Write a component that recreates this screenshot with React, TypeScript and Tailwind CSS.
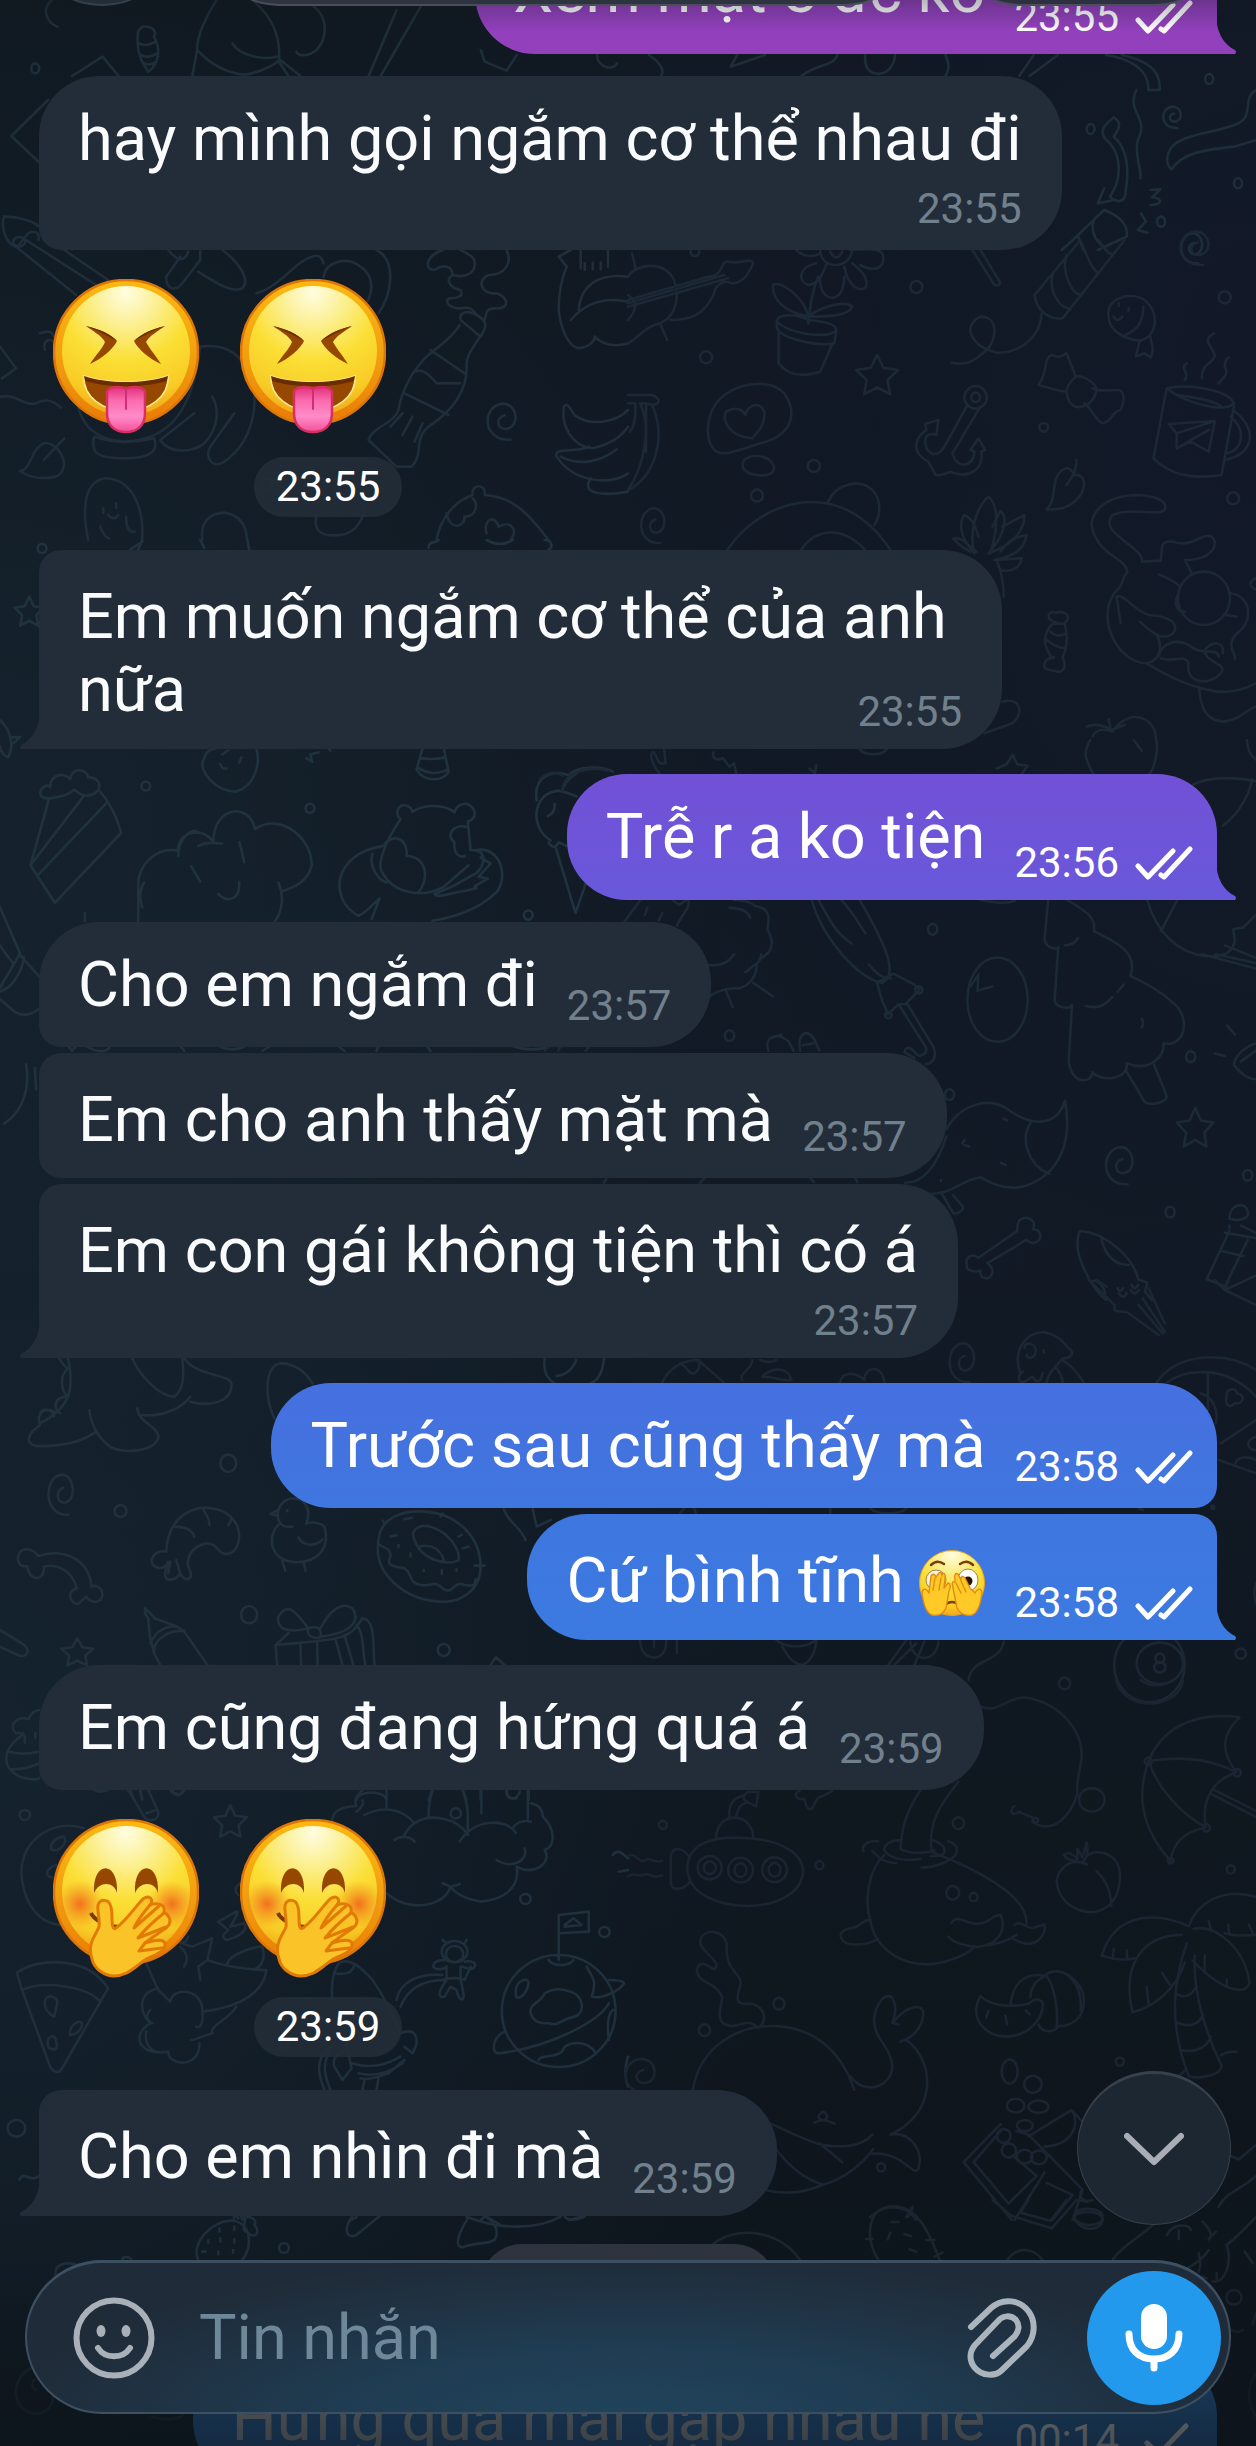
import React from "react";

/* ---------- wallpaper doodles ---------- */

const oval = (x: number, y: number, rx: number, ry: number) =>
  `M${x - rx} ${y}a${rx} ${ry} 0 1 0 ${2 * rx} 0a${rx} ${ry} 0 1 0 ${-2 * rx} 0`;

const dots = (rx: number, ry: number, ...pts: number[][]) => pts.map(([x, y]) => oval(x, y, rx, ry)).join("");

const spiral = (x: number, y: number, a: number, b: number) =>
  `M${x} ${y - 0.35 * b}C${x - 0.5 * a} ${y - 0.2 * b} ${x - 0.4 * a} ${y + 0.45 * b} ${x + 0.1 * a} ${y + 0.4 * b}` +
  `C${x + 0.8 * a} ${y + 0.3 * b} ${x + 0.7 * a} ${y - b} ${x - 0.1 * a} ${y - b}` +
  `C${x - 1.2 * a} ${y - 0.9 * b} ${x - 1.2 * a} ${y + 1.1 * b} ${x + 0.3 * a} ${y + b}`;

const star = (x: number, y: number, a: number, b: number) => {
  const pts: string[] = [];
  for (let i = 0; i < 10; i++) {
    const r = i % 2 ? 0.5 : 1;
    const t = -Math.PI / 2 + (i * Math.PI) / 5;
    pts.push(`${(x + a * r * Math.cos(t)).toFixed(1)} ${(y + b * r * Math.sin(t)).toFixed(1)}`);
  }
  return `M${pts.join("L")}Z`;
};

type Patch = { x: number; y: number; sx: number; sy: number; stroke: string; d: string };

const patches: Patch[] = [
  {
    x: 0, y: 0, sx: 0.8013, sy: 0.3333, stroke: "#1e2e39",
    d:
      "M65 0C50 30 60 70 72 80M172 110C170 160 178 190 185 215C200 190 200 140 192 110C200 80 170 60 172 110M174 130q8 12 20 -5M176 165q8 12 20 -5M180 190q8 8 15 -5" +
      "M270 0C255 60 245 110 246 150C265 200 285 220 305 224C330 215 345 190 348 180C350 130 345 60 315 0M290 130C300 170 330 180 345 170M385 10C410 40 410 110 395 150C385 170 372 170 370 155" +
      "M246 150L240 228M350 180L375 228M348 185L360 228M495 30L460 228M525 20L475 228M90 228L128 170L148 228M60 300L14 408L50 490" +
      "M600 150L605 185L632 212L645 165M745 165C745 200 765 215 770 190M810 165C825 190 830 210 825 228M920 165L912 200L955 165M1080 165C1075 240 1115 240 1117 165M1180 165C1185 190 1185 210 1180 228M1000 228C1020 190 1040 200 1045 165M1290 165L1272 228M1320 165L1285 228" +
      "M1380 165C1410 175 1435 210 1433 270L1447 270C1450 210 1430 180 1400 165M1418 270C1405 340 1435 350 1420 420C1415 470 1425 500 1423 535" +
      "M1390 352C1375 380 1370 400 1385 430C1400 470 1400 540 1385 590C1395 610 1405 610 1405 570C1410 500 1405 440 1390 410C1395 390 1402 370 1390 352" +
      "M1568 270C1550 290 1565 350 1545 370C1520 400 1470 400 1460 450C1453 480 1458 500 1462 508C1475 460 1500 450 1540 440L1568 420" +
      "M1436 570L1448 568L1438 592C1452 595 1450 615 1436 615M1424 640L1430 665L1420 690L1432 698" +
      "M1378 630C1400 650 1408 680 1406 710L1370 750M1378 630C1360 670 1340 720 1325 750M1365 660C1360 700 1370 730 1378 740M1345 705L1352 750" +
      "M5 650C0 690 10 740 22 740L35 700C45 690 50 700 48 720M5 650C30 650 45 670 55 690L90 748M1378 565L1370 610L1390 600" +
      dots(5, 15, [44, 205], [1509, 237], [1361, 387], [1545, 550], [1449, 665]) +
      spiral(1465, 352, 15, 32) + spiral(1490, 745, 18, 45),
  },
  {
    x: 0, y: 240, sx: 0.4005, sy: 0.3333, stroke: "#1f2e3a",
    d:
      "M40 20L190 165M65 0L240 135M160 30L270 120M420 30C440 60 460 70 470 35M450 50L415 110C415 150 440 155 455 130L500 60L500 30M495 95C540 130 580 160 605 145C625 120 600 70 555 30" +
      "M640 160C700 140 740 60 780 50C800 40 805 60 808 70M808 110C815 60 870 50 900 80C940 110 930 180 905 200M940 30C990 60 980 160 945 220" +
      "M1105 30C1060 50 1060 90 1085 90C1110 70 1130 80 1130 105C1160 115 1185 100 1185 75C1190 50 1165 40 1150 30M1265 30C1280 70 1260 105 1220 105C1190 120 1200 165 1240 160C1270 170 1275 210 1235 205C1215 205 1215 215 1210 240M1130 105C1110 120 1125 145 1150 150C1160 170 1140 175 1120 175C1110 190 1125 205 1150 205C1180 200 1180 210 1190 225" +
      "M1150 240C1145 215 1170 210 1190 225C1220 245 1215 260 1200 290L1150 240M1148 255C1120 310 1075 330 1050 370C1020 410 1000 470 995 510C985 550 930 560 920 600L990 680L1028 680C1060 640 1030 600 1070 560C1120 520 1170 460 1165 370C1165 340 1190 310 1200 285M1075 330L1160 400M1030 400C1050 380 1070 400 1090 430L1150 430M1010 460L1120 525M1005 520L975 560M1030 530L1005 585M1055 550L1035 605" +
      "M0 320L40 385L5 415M100 280C120 270 130 275 135 290M112 330C105 300 130 290 135 310M0 470C40 460 60 500 90 490C120 470 140 490 152 503M190 470C200 560 240 600 310 605C420 600 480 520 500 320C560 310 600 340 620 400C650 460 640 600 560 665C530 690 510 650 525 620L585 520M400 600C420 640 480 640 510 610C550 560 545 500 530 470M400 600L485 520M235 590C225 640 245 655 310 655C380 655 395 630 385 595C330 610 280 610 235 590" +
      "M50 693C80 690 75 620 115 608C160 620 175 690 140 710C100 720 70 710 50 693M110 660L160 595M220 900C200 780 220 720 265 715C330 720 360 800 355 900M258 805v14M290 790v14M270 825q15 20 25 0M250 860q10 30 22 35M315 830q0 50 22 45" +
      "M505 900C500 850 520 820 560 818C600 825 615 860 617 900M790 825C780 880 810 890 850 885C890 880 915 830 910 780M1090 900C1100 830 1140 780 1180 765C1175 730 1215 730 1210 765C1290 770 1330 840 1370 900M1115 820C1120 870 1160 865 1160 830C1190 830 1195 790 1180 775M1215 880C1205 840 1235 820 1245 860C1275 840 1295 870 1275 900" +
      "M1425 30L1395 50L1415 80C1400 120 1395 170 1395 210C1400 270 1420 320 1445 325C1475 320 1485 300 1485 290M1450 30V85M1518 30V80M1460 70v20M1480 68v20M1500 68v20M1445 210C1450 130 1500 100 1568 110M1425 240C1460 190 1510 170 1568 185M1485 290C1510 320 1540 320 1568 310" +
      "M1408 500C1420 480 1425 520 1440 530C1480 560 1540 545 1568 510M1408 500C1400 560 1430 620 1480 625C1530 610 1550 590 1568 560M1390 650C1380 620 1440 640 1470 620M1390 650C1440 740 1540 730 1568 700M1400 650C1450 680 1500 665 1540 628M1475 715C1450 760 1500 770 1568 755" +
      dots(14, 15, [665, 733]) + spiral(1260, 545, 48, 54) + oval(48, 5, 15, 14),
  },
  {
    x: 628, y: 240, sx: 0.4005, sy: 0.3333, stroke: "#1c2836",
    d:
      "M0 110C20 70 90 60 115 120C130 170 120 230 80 250C40 260 20 300 0 310M0 180L200 110C240 110 230 60 250 65C280 75 310 50 312 70C300 110 280 130 260 130C240 120 220 130 215 160C190 230 150 240 105 240M0 190L240 105M0 200L250 115M80 250L98 300M0 165q35 30 0 75M10 40L20 90" +
      "M420 30C440 55 470 50 480 40M480 30C480 90 555 90 560 30M470 70C430 80 420 120 450 135C480 130 485 100 495 75M480 120C480 190 540 195 540 110M540 80C550 140 580 160 595 140C600 110 580 90 560 70M555 30C590 30 620 20 635 40C645 80 620 100 580 75M505 35q15 35 30 0" +
      "M450 250C455 200 460 150 475 110M450 230C440 170 380 120 362 135C360 180 390 215 450 230C490 230 550 230 560 200C540 180 480 200 450 230M372 245C370 220 420 220 450 240C500 245 520 255 520 270C500 300 400 280 372 245C370 270 375 270 378 275C400 300 480 320 515 310L520 275M376 270V370C400 410 440 410 480 395L510 312" +
      star(622, 410, 55, 65) +
      "M240 640C190 640 190 540 220 490C260 430 350 410 390 460C430 530 400 590 330 610C290 625 260 640 240 640M310 595C250 590 235 540 245 515C265 500 285 505 293 525C300 490 330 485 340 515C345 550 325 575 310 595M290 660C310 640 350 645 363 675C370 700 350 710 320 705C290 700 280 680 290 660" +
      "M0 465L60 465C90 480 75 500 50 492L30 490C60 560 40 680 0 750M60 495C100 600 60 720 0 750M45 490V635M0 490L18 490C20 540 15 560 5 575" +
      oval(868, 472, 28, 34) + oval(868, 472, 11, 14) +
      "M848 495L790 620C770 660 740 640 742 600C745 580 760 580 770 585L775 540L742 552L745 570C710 600 710 640 750 665L768 705C790 710 800 690 810 698C850 715 890 690 882 635L892 630L875 595L855 630L865 635C865 680 820 690 810 640L880 500" +
      "M860 30L915 135C925 140 930 130 928 125L880 30M1130 0L1015 165C1020 210 1050 240 1085 235L1240 0M1095 45C1080 100 1110 160 1130 165M1060 105C1050 160 1080 200 1098 205M1133 10C1150 60 1160 90 1175 100M1175 0C1190 30 1200 40 1210 45M1033 220C1030 290 980 340 920 338C860 320 830 260 880 230C930 230 920 310 890 335C860 370 840 375 808 368" +
      "M1200 230C1190 180 1250 150 1290 180C1330 220 1320 290 1280 302C1240 300 1200 270 1200 230M1287 200C1285 260 1265 270 1240 287M1278 300L1268 350L1290 340L1305 352C1320 320 1300 300 1305 290M1225 190v8M1250 205v8M1212 230q10 20 22 0" +
      "M1025 435C1050 400 1035 350 1060 345C1080 360 1090 340 1095 340L1118 410C1100 430 1095 445 1095 455C1070 455 1045 440 1025 435M1095 455C1100 510 1130 505 1145 495C1165 480 1175 450 1165 435C1145 410 1120 405 1118 410M1140 490C1160 510 1170 545 1185 550C1210 545 1210 510 1230 510C1240 490 1240 450 1225 450C1190 450 1170 455 1160 445" +
      "M1345 445L1312 655C1350 700 1400 720 1482 705L1513 500M1345 445C1400 430 1500 450 1513 490C1490 520 1390 490 1345 445M1370 465C1400 470 1470 480 1480 500M1510 510C1570 560 1570 640 1490 660M1505 530C1545 570 1535 630 1495 640M1350 552L1465 543L1370 580L1350 552M1370 580V625L1450 570M1465 543L1450 635L1405 605L1370 625" +
      "M1390 420C1405 400 1375 385 1395 370M1433 415C1430 370 1465 370 1465 345C1460 320 1430 300 1463 280M1475 430C1490 410 1500 400 1490 380C1490 360 1500 352 1500 352" +
      "M1045 808C1075 780 1050 700 1095 685C1110 685 1110 700 1115 705C1140 700 1150 740 1120 780C1100 805 1070 810 1045 808M1095 735C1110 710 1120 690 1120 660" +
      "M248 930C330 780 530 700 655 930M500 785C520 730 580 715 610 750C635 780 630 830 615 855M432 930C470 860 540 860 592 930" +
      "M865 940C850 880 870 800 900 770C930 800 920 880 905 940M870 935C830 910 825 850 840 825C865 840 870 870 875 890M910 860L930 812C955 840 930 900 900 940M935 860L990 825C990 880 950 920 900 940M930 935C950 900 970 890 995 885C990 930 960 950 915 960M855 935C830 920 815 900 812 895C830 890 850 910 860 935M930 990C960 1000 980 980 983 955L920 960C935 1000 938 1040 938 1070" +
      "M1340 810C1350 780 1310 765 1265 765C1180 770 1150 830 1160 870C1180 950 1240 950 1247 995C1230 1020 1235 1040 1225 1045C1160 1120 1220 1270 1295 1270C1350 1310 1400 1340 1470 1355C1520 1360 1550 1340 1568 1330M1340 810C1320 830 1260 800 1210 825C1170 880 1290 920 1283 965L1330 962C1335 930 1325 900 1360 905C1410 925 1430 880 1455 888C1480 910 1460 960 1390 960L1408 1000M1325 1003C1360 1020 1370 1030 1380 1040" +
      oval(1438, 1075, 65, 80) +
      "M1375 1060C1360 1090 1370 1115 1390 1115M1230 1150L1220 1070C1240 1060 1260 1110 1300 1125C1400 1130 1370 1210 1320 1185C1300 1170 1290 1160 1278 1145M1320 1185C1340 1230 1320 1265 1295 1270M1325 1250C1330 1210 1370 1195 1400 1215C1430 1250 1470 1220 1475 1250M1400 1270C1390 1330 1450 1340 1480 1300C1500 1270 1440 1270 1440 1230C1460 1200 1490 1205 1485 1240M1330 1255C1360 1270 1390 1240 1400 1270M1495 1125L1520 1130M1505 1060C1560 1070 1560 1150 1520 1180C1490 1220 1520 1240 1515 1258M1425 1340C1430 1400 1440 1440 1485 1445C1530 1440 1540 1410 1568 1400M1568 1015Q1540 1030 1568 1050" +
      "M1075 1150C1040 1140 1045 1110 1070 1118C1090 1110 1110 1130 1090 1150C1100 1190 1095 1230 1085 1250C1100 1290 1080 1300 1068 1293C1045 1290 1030 1285 1045 1260C1060 1250 1070 1250 1060 1255C1035 1220 1035 1180 1060 1152L1090 1150M1055 1175q15 20 40 5M1045 1200q20 20 45 25" +
      "M1145 1460C1160 1450 1190 1455 1205 1470L1200 1437M1205 1470L1240 1455M1160 1490C1170 1460 1200 1470 1210 1475C1250 1400 1320 1430 1318 1500M935 1385C980 1370 990 1420 960 1450L890 1480" +
      dots(15, 18, [195, 352], [720, 141], [464, 678], [322, 767], [1490, 172], [1511, 775]) +
      dots(11, 13, [1038, 562], [167, 35]) +
      spiral(68, 857, 40, 52) + spiral(1422, 25, 48, 50),
  },
  {
    x: 0, y: 540, sx: 0.4005, sy: 0.3827, stroke: "#21323f",
    d:
      star(73, 190, 38, 42) +
      "M0 470C30 500 35 540 20 568C10 565 0 550 0 540M30 515L50 515L35 530M105 672C90 650 120 635 125 645C130 605 165 610 175 625C180 590 220 600 220 620C260 620 255 665 220 668C200 670 190 655 185 652C170 670 120 680 105 672M122 678L76 850L137 948L303 765C290 720 270 680 248 655M76 850L210 668M95 875L268 685" +
      "M345 995V900C345 850 390 800 445 812C440 770 500 740 533 790C530 700 620 680 637 755C700 710 780 780 778 850C770 890 740 905 705 918M445 825C445 800 460 760 490 760M495 800C510 790 530 790 555 793M598 790L610 842M477 852L500 893M545 925C570 950 600 940 597 893M695 895C710 930 705 970 687 995M360 895C345 920 350 940 355 960" +
      "M510 570C490 600 540 660 590 657C640 640 650 580 640 545M510 570C515 550 530 545 540 545M550 585q5 15 15 12M570 550L555 560M603 568L597 582M765 570L780 580L775 560L795 555M820 545L825 550" +
      "M1055 545L1040 600C1060 635 1110 630 1120 605L1108 545M1050 570Q1080 575 1112 568M1043 595Q1080 620 1118 600" +
      "M1000 730C980 710 1000 680 1025 700L1030 710C1060 690 1110 690 1135 712C1140 690 1165 680 1180 700C1195 720 1175 735 1168 735L1175 810M1000 730C960 790 940 850 955 870C980 920 1050 940 1110 905L1170 850M960 795C990 760 1020 790 1015 825C1070 830 1070 890 1045 920M1165 750C1135 740 1110 770 1135 790C1130 830 1160 830 1160 825M955 800C830 820 820 940 895 982C920 970 930 950 948 937L928 990M930 820C920 860 950 890 965 895M1175 810C1220 810 1210 850 1190 870L1130 905L1085 925C1090 935 1100 930 1190 910L1185 905L1218 885L1195 880L1225 845L1200 830M1190 810C1250 800 1270 880 1240 920C1190 970 1130 985 1080 995" +
      "M1340 680C1330 610 1390 600 1420 615C1440 590 1500 590 1530 605M1405 655C1410 630 1430 615 1440 610M1375 785C1320 750 1330 660 1395 655C1420 660 1430 665 1440 670M1385 690Q1385 715 1368 722M1370 790C1380 810 1390 800 1395 790L1415 800M1388 805L1437 975L1465 890" +
      "M0 960L50 1080L0 1170M0 1060L35 1110M50 1085L98 1140M0 1200L40 1235C60 1245 80 1240 98 1225M0 1180C30 1170 55 1130 60 1090M65 1370C75 1430 60 1490 10 1525M87 1380L90 1435M212 975V995M170 1322L180 1335L190 1322M215 1322C240 1340 270 1340 275 1322M450 1322L460 1335M545 1322Q580 1340 615 1322M655 1335L675 1322M845 1322L860 1335M940 1335L945 1322M1065 1322L1075 1335M1280 1322Q1330 1340 1375 1322M325 25L355 5V0M345 25L355 0M500 0L510 20M618 0L622 25M1070 20C1070 0 1090 10 1095 0M1215 0Q1250 20 1280 0M1360 0C1380 0 1380 20 1370 25" +
      dots(11, 12, [105, 22], [364, 643], [774, 701], [1319, 980]),
  },
  {
    x: 540, y: 740, sx: 0.4566, sy: 0.3571, stroke: "#1c2936",
    d:
      "M262 95C240 60 240 30 250 35C260 60 260 70 275 65L272 25M380 35C375 50 390 60 400 50L415 75L425 65L430 95M0 110C20 85 40 90 50 100M48 145C50 100 90 70 150 85M590 80L602 92M605 70L603 88M700 25C710 45 750 45 760 25M1000 80L1022 68L1035 42L1045 68L1068 72L1055 95M1195 45C1195 20 1200 10 1205 0M1195 45C1200 70 1208 85 1212 95M1350 0C1355 30 1345 80 1335 95M1300 0L1318 30M1430 125C1470 100 1530 105 1568 115M1560 110C1550 170 1520 220 1495 240M1548 0Q1550 40 1568 55" +
      "M185 508L220 448M235 470L230 490M268 485L260 505M325 448C330 470 310 490 300 520M290 448L305 462L320 448M415 470C440 470 455 480 460 497M425 448C460 450 470 462 470 465C510 470 500 510 498 530C520 580 500 600 480 615M370 630C400 635 415 620 425 600M450 650L480 620L485 600M475 625C475 680 440 700 425 695C390 700 380 710 372 718M467 680L510 718M408 705L422 748" +
      "M595 448C620 560 700 670 750 680C780 660 770 600 700 448M610 448C640 520 650 540 682 570M660 448C690 490 700 520 713 542M720 628C740 660 750 665 768 668M773 655L738 680C745 710 750 740 755 745L762 768L785 740L800 740L823 710L832 700L820 685L775 655" +
      oval(763, 770, 7, 9) + oval(830, 700, 8, 10) +
      "M788 745L845 860C850 880 830 890 825 880C805 850 800 865 798 875L820 890M805 740L862 860C870 890 860 905 845 908" +
      oval(1002, 727, 66, 118) +
      "M943 690L960 657L958 702L990 690M960 445C990 455 1020 460 1040 450" +
      "M1113 448L1105 560C1110 590 1140 585 1135 580L1127 730C1130 750 1160 755 1165 742L1158 900C1165 970 1210 960 1210 930C1230 960 1290 950 1285 905C1330 930 1370 890 1365 850C1420 860 1420 770 1390 740C1350 690 1290 660 1293 660C1310 600 1270 570 1213 535C1220 490 1180 470 1155 448M1150 575Q1170 575 1178 555M1195 745C1225 755 1240 740 1253 720M1265 705L1278 685M1318 780q5 15 0 25M1283 925L1325 1015C1350 1025 1375 1010 1372 995L1345 910" +
      "M1330 448C1350 540 1400 600 1460 605C1510 610 1520 580 1522 560L1518 530L1540 525L1568 490M1360 535L1395 450M1450 600L1568 640M1500 575L1568 610M1480 600L1568 625" +
      star(1435, 1090, 42, 60) + spiral(1275, 1192, 40, 52) +
      "M1505 800L1522 825M1478 878L1500 885M1568 850C1540 860 1520 890 1520 910C1540 945 1560 950 1568 950M1535 900L1568 870" +
      "M890 1090C920 1020 980 1000 1020 1030C1070 1080 1130 1090 1150 1010C1165 1120 1140 1180 1110 1215C1060 1270 1010 1260 965 1225C920 1230 900 1280 840 1270M1075 1070C1050 1120 1070 1190 1115 1215M800 1240C840 1240 870 1190 890 1110M930 1120L925 1130M940 1138L930 1135M1010 1185l10 5M1015 1060l8 5M878 1232v3M880 1270L905 1325C920 1330 930 1310 925 1305L905 1275" +
      "M1045 1375L960 1450C945 1435 930 1450 935 1470C930 1490 960 1490 965 1485C960 1510 985 1515 990 1495C995 1480 985 1470 980 1465L1065 1400C1080 1420 1100 1400 1095 1385C1095 1370 1080 1370 1080 1370C1090 1340 1060 1330 1050 1345C1045 1355 1045 1365 1045 1375" +
      "M1183 1375C1160 1430 1210 1540 1240 1568M1183 1375C1240 1380 1300 1450 1310 1510L1330 1520L1325 1545L1340 1568M1230 1400C1240 1450 1260 1470 1290 1470M1210 1515C1220 1510 1235 1530 1238 1550M1265 1535q5 15 12 0M1295 1525q8 20 15 0" +
      "M1510 1340C1510 1300 1545 1290 1550 1320C1555 1340 1530 1350 1510 1340M1510 1360v8M1535 1360L1568 1380M1510 1375L1460 1510L1500 1530L1550 1400M1500 1380L1568 1395M1490 1430L1540 1445M1500 1540L1568 1500" +
      "M500 870C490 830 520 815 545 845L555 870M570 870C560 820 590 800 605 850L612 870M575 855L598 850M505 835Q520 830 528 825M590 1225L600 1238M690 1225L695 1238M140 1240L145 1228M350 1240L360 1228M10 870L20 858M40 870L45 858M100 870L108 858" +
      dots(10, 15, [860, 530], [415, 828], [897, 993], [1425, 887], [1550, 1219], [1380, 1322]),
  },
  {
    x: 0, y: 1300, sx: 0.4005, sy: 0.3333, stroke: "#20303c",
    d:
      "M148 175C155 190 160 200 170 205C145 230 155 280 170 290C130 290 135 330 150 340M170 175C185 260 180 320 100 370M330 175C350 230 400 290 435 290C460 270 460 220 455 175M460 175C490 230 570 220 578 250C580 310 520 320 475 305M475 290C450 330 400 350 355 345M343 325C345 370 400 380 395 415C380 460 300 460 275 440C240 410 225 360 223 330M240 395C200 430 140 440 90 438C60 430 70 400 100 375C90 340 110 320 135 335M100 345C100 320 130 325 135 350M685 355C660 290 660 200 700 190C740 190 765 220 780 250M1360 175C1355 220 1370 240 1385 250M1508 175C1505 215 1495 240 1475 250M1438 180C1430 210 1410 225 1390 228" +
      spiral(158, 584, 42, 60) +
      "M95 768C80 740 45 740 45 775C45 800 60 800 68 798C70 840 110 850 110 800C140 790 180 810 192 865C165 875 175 910 195 912L215 890C235 920 260 900 255 880C255 860 235 855 228 860C225 790 170 740 95 768" +
      "M415 755C420 650 480 615 530 625C610 640 610 740 575 760C540 770 550 730 515 730C480 740 465 770 470 800C490 840 460 850 450 820C440 840 410 850 412 820L420 785C410 820 370 800 380 775C385 760 400 750 415 755M435 680C460 680 480 690 485 710M508 630C520 650 523 660 523 675M570 675L580 655M425 785L420 820M440 780L450 820" +
      "M765 670C775 640 770 600 735 595C695 595 685 650 700 670C710 685 720 680 730 680M700 670C665 700 670 785 740 787C800 785 820 740 812 690C810 665 775 665 765 672M695 630L675 642L695 648M717 630v4M745 712C755 740 790 740 805 718M705 783L712 812M758 787L763 812" +
      "M945 720C950 650 1010 630 1060 635C1140 640 1200 710 1200 800C1200 870 1150 910 1100 905C1010 900 930 820 945 720C940 750 975 730 975 770C960 800 990 800 1010 805C1030 820 1020 850 1050 855C1080 860 1085 840 1105 865C1130 890 1130 840 1160 855C1200 865 1180 830 1190 840M1035 720C1020 680 1060 670 1085 685C1120 700 1150 750 1145 780C1120 800 1050 780 1035 720M1045 740C1080 730 1100 750 1108 780M1010 658l18 -5M1100 650l5 -10M960 670l-4 -8M1145 710l8 -6M1155 745l15 -5M975 710l15 -4M1025 760v10M1103 810v12M1140 808v5M1058 810v4M995 735v6M1185 797h25" +
      "M362 925C375 940 385 950 385 955L440 978L460 995L518 1095M362 925V940L370 955L375 1015L385 1060L400 1095M375 1030C390 990 420 975 440 980M385 1060C380 1020 420 990 460 992M0 990L60 1035C75 1050 70 1070 50 1068L0 1040" +
      star(193, 1060, 42, 45) +
      "M770 985C740 940 720 900 695 950C690 990 720 1000 770 985M800 985C820 940 850 900 880 925C900 960 880 1000 800 1010M770 985C765 1000 775 1020 800 1012C805 990 795 975 770 985M720 1000L688 1035L692 1095M688 1035C740 1030 800 1025 840 1015C880 1005 890 980 905 955C940 960 930 1040 935 1095M750 1030L752 1095M792 1025L793 1095M838 1018L855 1095M860 1005L882 1095M890 975C910 1000 905 1060 912 1095M1225 1095L1238 1072L1260 1095" +
      "M98 1230C90 1230 75 1240 72 1258C40 1245 20 1280 40 1300C60 1295 55 1310 45 1315C10 1350 0 1400 50 1430C70 1440 90 1440 98 1435M20 1355C50 1365 80 1360 98 1355M28 1408C60 1410 80 1400 98 1390M62 1310v18M88 1300v15M58 1300v6M235 1470Q250 1480 268 1470M325 1470L335 1500M350 1470L355 1500M430 1470C440 1490 455 1485 460 1470M890 1500C895 1470 960 1470 965 1500M1070 1500L1080 1470M1155 1470L1165 1500M1200 1470V1500M1265 1470Q1265 1500 1290 1495M1320 1470V1500M1258 628C1270 670 1300 680 1312 720M1330 628L1340 680L1375 660" +
      dots(20, 26, [570, 490], [622, 944]) + dots(15, 18, [301, 633], [1108, 1050]),
  },
  {
    x: 628, y: 1280, sx: 0.4005, sy: 0.3333, stroke: "#1c2734",
    d:
      "M85 308C100 270 130 240 175 240L240 308M130 250C150 260 150 285 165 280C180 270 180 250 175 240M310 240C310 270 275 280 285 300M330 240C350 250 365 245 370 240M335 290C360 260 400 260 408 300C380 305 370 290 335 290M530 308C530 280 565 270 590 300C590 260 635 250 640 308" +
      spiral(840, 248, 42, 58) +
      "M978 275C960 200 1000 155 1040 157C1080 165 1095 200 1100 205C1115 215 1110 235 1085 235C1060 270 1050 280 1045 308M990 205C990 180 1020 190 1018 215C1015 240 995 235 995 225M1038 210v8M985 275C970 290 975 310 990 305L1010 290C1020 310 1030 310 1035 280M1085 240C1110 260 1125 280 1138 308M1070 265C1080 280 1085 295 1085 308" +
      "M1150 0L1215 75V90C1230 100 1240 90 1250 100L1325 165M1195 20L1170 0M1300 25L1340 130M1285 55L1340 155M1275 75L1335 160M1225 40q12 20 20 0M1255 30q12 20 20 0M1490 30L1568 75M1465 0L1490 30L1500 0" +
      "M1320 308C1370 220 1490 210 1568 270M1345 308C1400 260 1500 260 1568 350M1448 285V390M1430 340C1460 350 1475 390 1468 430M1495 350C1490 325 1520 320 1520 340C1545 345 1535 375 1515 370C1500 390 1490 370 1495 350M1480 490L1568 420M1475 540L1568 580M1515 555C1520 525 1550 530 1568 540M1568 470C1540 480 1545 510 1568 510" +
      "M30 1080C30 1150 100 1150 95 1080M65 1080V1100M122 1080V1120M370 1080C400 1110 450 1100 470 1080C470 1120 450 1150 435 1155C410 1150 400 1130 385 1100M650 1155L695 1080M665 1155L720 1090M705 1085C710 1150 770 1150 775 1085M715 1155L740 1085M850 1200C860 1130 930 1150 938 1085" +
      oval(1302, 1155, 88, 112) + oval(1328, 1150, 58, 62) + oval(1328, 1135, 11, 14) + oval(1328, 1162, 14, 16) +
      "M130 700L140 685M165 685L170 700M605 685C620 705 680 705 695 685M505 685V700M1275 685L1285 690M1568 910Q1560 940 1568 970" +
      dots(13, 15, [1530, 1121]) + dots(4, 5, [1460, 682]),
  },
  {
    x: 0, y: 1780, sx: 0.4005, sy: 0.3333, stroke: "#1f2f3b",
    d:
      "M320 30L360 110C370 130 400 120 395 95L370 30M365 100L390 90M425 30C440 55 455 45 455 30" + star(575, 128, 43, 52) +
      "M210 145C120 110 40 200 55 300C65 380 100 430 150 435M130 210C120 190 145 170 160 170C170 190 150 215 130 210M140 255C115 265 110 290 130 292" +
      "M890 95C905 80 910 70 905 60M830 120C830 90 860 80 890 78C880 50 900 40 905 30M965 30V85M910 105C950 80 1000 80 1035 130C1070 100 1140 110 1168 165M1148 185C1180 120 1260 110 1288 158M1168 165V95C1165 60 1160 50 1155 30M1070 110C1070 70 1075 50 1080 30M1035 130C1020 140 1015 155 1010 165M985 180C1000 165 1025 170 1035 185M1202 30V100M1318 30V115M1265 30C1260 60 1290 65 1298 35M1280 145C1290 125 1310 120 1325 125M1325 70C1350 75 1355 95 1355 110C1390 150 1385 200 1360 210C1380 250 1330 290 1290 260M1310 205C1320 240 1280 270 1240 240M1290 260C1300 330 1250 360 1200 365C1150 355 1130 330 1125 320L1105 310M1125 320L1148 312M1125 320C1110 380 1020 400 965 340" +
      "M42 578C100 530 220 530 270 625L250 665C220 620 110 600 55 630M42 578L55 630L125 860C135 880 148 880 155 865L270 625M112 670C110 640 145 645 143 670L135 710C120 700 112 690 112 670M175 765C172 740 195 715 205 730C205 750 190 765 175 765M120 795C115 765 140 760 140 785C145 800 140 810 135 808C125 810 120 800 120 795" +
      "M545 425L590 395C600 390 580 430 575 440L610 430C620 450 600 470 565 480C550 470 560 460 570 450L545 425M365 550L395 630L425 665M450 500C470 520 470 540 460 560M430 480L480 500L530 475L518 540L495 560L500 600M518 540C560 560 630 570 665 570C660 630 610 680 505 695M567 555C570 520 640 500 655 500C665 540 650 560 640 565M590 680C570 720 520 740 530 760C500 770 490 780 478 780M425 665C430 620 505 625 505 690C510 740 495 745 490 740M395 625C340 640 350 700 375 730C330 760 340 830 420 815C420 860 500 865 498 790M375 690C360 710 370 725 380 730M365 755C360 790 375 810 390 815" +
      "M830 660C825 600 835 570 845 550C870 530 900 560 930 600C960 650 990 730 1000 760C1040 740 1050 780 1030 820L1010 800M835 580C860 585 880 580 885 555M1000 830C970 850 930 870 878 850M1005 850C970 880 930 890 895 880M1010 840L970 880C940 895 910 900 900 895M860 770C870 800 870 830 878 865L855 900L835 860C830 840 835 825 865 810M825 800C780 840 800 900 810 930M820 820C800 870 820 910 825 930M910 900L905 930M945 895L940 930M990 660C1000 600 1050 580 1105 585M1000 680C1020 620 1060 600 1110 600" +
      oval(1135, 515, 32, 32) + oval(1135, 522, 22, 24) +
      "M1115 490L1105 480M1160 490L1165 480M1110 540C1090 540 1080 550 1082 560C1090 575 1110 565 1115 560M1160 545C1180 540 1190 550 1185 560C1180 575 1155 560 1155 560M1115 560V600C1090 640 1095 655 1110 650L1125 620L1140 630C1145 660 1155 665 1158 650C1155 620 1150 600 1150 600V560M1160 600L1175 560M1105 600Q1130 590 1155 598" +
      oval(1395, 693, 142, 168) +
      "M1395 540V405L1470 395V455L1395 460M1410 435L1432 415L1452 435L1410 440M1370 540C1380 560 1420 560 1432 540M1325 700C1320 670 1350 670 1360 640C1390 620 1410 630 1425 635C1460 650 1460 700 1435 710C1390 720 1400 740 1370 730C1340 730 1330 720 1325 700M1288 630C1290 600 1320 590 1320 610C1315 640 1300 660 1288 650ZM1465 560C1480 600 1490 590 1478 650C1500 660 1550 630 1558 610C1555 600 1530 600 1520 600M1260 755C1230 770 1225 820 1245 820C1380 800 1500 720 1520 670M1345 840C1350 820 1400 840 1410 800C1440 780 1470 790 1485 815M1530 690C1510 710 1520 770 1520 780M1530 225C1545 200 1560 230 1568 235M1545 275L1568 270M1568 830Q1555 880 1568 920" +
      "M48 1200C60 1170 75 1210 98 1188M590 1308L595 1315M875 1320L890 1312M1210 1310L1200 1320M1420 1320L1460 1308" +
      dots(13, 15, [62, 105], [1138, 100], [1312, 357], [1509, 456]) + oval(41, 1045, 22, 25) + oval(710, 790, 12, 14) + "M620 300C590 310 580 330 595 345M450 480Q460 500 470 470",
  },
  {
    x: 628, y: 1680, sx: 0.4005, sy: 0.3444, stroke: "#1a2531",
    d:
      "M0 510C20 500 25 530 40 525C60 510 60 535 85 525M0 570C20 555 25 575 40 565C60 560 60 580 85 567M150 510C140 490 110 480 107 510V590C110 615 140 610 155 585" +
      "M148 545C150 470 220 455 280 458C360 460 435 490 437 555C435 620 370 655 300 656C220 655 150 620 148 545M220 460C220 380 310 380 313 458M253 400C250 360 265 340 290 335M270 400C275 370 280 360 300 355M300 325C280 340 285 350 320 367L325 325H300" +
      oval(204, 545, 30, 34) + oval(204, 545, 15, 18) + oval(281, 552, 31, 36) + oval(281, 552, 15, 20) + oval(366, 551, 31, 36) + oval(366, 551, 15, 20) +
      "M430 320C410 330 420 350 440 345C445 370 450 380 460 372C470 350 470 340 490 335L510 322M730 320C690 390 685 430 680 490M825 295C790 350 750 400 757 490M640 495C640 475 660 465 680 465M640 495C660 525 700 525 730 520M680 490C700 505 740 505 765 495M757 465C780 470 800 490 785 508L755 512M625 468C600 465 580 480 588 498M610 497C630 520 640 530 670 532M800 468C830 480 830 510 790 530C770 540 750 545 733 545" +
      "M640 508C600 550 590 640 605 700C620 790 690 830 760 825C800 820 840 800 862 778M760 500C850 540 1000 620 995 708M605 695C580 700 580 720 550 722C520 730 525 770 570 768C600 768 610 760 625 752M808 705C820 680 840 705 870 708C900 710 910 680 930 682C945 720 930 770 870 775C830 770 810 760 800 745M900 770C930 765 950 755 970 740M965 712C980 695 990 720 1010 720L1040 710C1045 740 1020 770 995 765C980 765 970 755 958 750" +
      oval(811, 618, 16, 20) + oval(863, 630, 10, 12) +
      "M870 70C920 110 950 40 1000 52C1080 70 1140 150 1132 230C1125 280 1120 290 1122 330C1110 380 1080 425 1045 425C1020 425 1015 415 1010 400L975 382C960 400 950 380 965 366" +
      oval(1158, 348, 32, 34) + oval(1017, 408, 7, 8) +
      "M1218 0C1230 50 1270 70 1310 68C1350 65 1380 40 1386 0M1280 0C1300 20 1340 20 1360 0" +
      "M1300 235C1330 150 1400 90 1527 108C1480 160 1480 210 1520 268M1300 235C1360 225 1440 220 1520 268M1300 235C1320 310 1380 390 1443 428M1300 235C1270 330 1280 430 1355 525M1520 268C1460 290 1430 350 1443 428M1443 428C1390 440 1360 470 1355 525M1465 320L1568 380M1458 332L1568 398" +
      oval(1299, 236, 9, 11) + oval(1521, 269, 9, 11) + oval(1444, 429, 9, 11) + oval(1355, 525, 7, 8) +
      "M1130 530C1090 520 1060 570 1075 610C1090 660 1140 680 1170 672C1220 660 1230 600 1228 560C1225 510 1180 485 1145 510M1145 535C1120 520 1100 530 1088 508C1100 495 1115 510 1122 520V490L1135 515L1145 472C1150 500 1145 520 1135 528M1170 555C1200 590 1205 620 1207 655" +
      "M1400 715C1340 680 1220 660 1183 800C1210 810 1240 815 1265 808M1383 740C1290 740 1230 820 1260 965C1310 950 1370 900 1390 820M1400 715C1420 650 1480 600 1568 630M1412 722C1470 710 1540 780 1552 880C1540 920 1480 900 1410 815M1490 735C1520 745 1540 742 1568 740M1395 765C1360 880 1350 1000 1400 1150C1420 1160 1480 1150 1482 1120C1440 1020 1410 900 1415 800M1370 910C1390 930 1410 910 1420 890M1372 995C1400 1010 1430 1000 1435 970M1385 1075C1420 1085 1450 1060 1455 1035M1213 780L1210 810M1245 785L1247 808M1295 890L1300 945M1333 850L1353 885M1440 800L1440 850M1495 870V890M1450 700L1455 725M1498 710L1502 740M1550 710L1560 735M1480 1090C1500 1075 1510 1080 1520 1080M1375 1150L1395 1130" +
      "M955 945C960 880 990 850 1040 858C1080 820 1140 880 1138 930C1140 980 1110 1005 1075 1005C1060 1030 1030 1020 1025 1000M1005 920C1005 890 1020 870 1045 858C1065 890 1075 960 1070 1010M1070 845C1110 850 1135 900 1130 960M880 918C850 980 890 1035 945 1035C1000 1035 1040 980 1035 935C1020 920 1010 930 1000 940C960 950 910 950 880 918M900 960L895 980M942 975L947 1000M993 960L1003 970" +
      "M162 1190C180 1060 280 1000 370 1005C460 1010 530 1070 565 1190M555 1150C590 1210 660 1180 660 1120C655 1060 610 1040 615 980C620 940 640 910 658 920C675 950 665 980 660 995L675 1000M665 990C700 940 740 940 737 970C735 1010 710 1040 680 1050M695 1045C770 1110 770 1260 655 1320C700 1310 740 1360 725 1420C710 1445 690 1370 610 1375M610 1320C580 1360 520 1360 470 1345C430 1330 380 1300 350 1285M365 1355C400 1410 440 1450 488 1465C540 1450 590 1400 612 1362M488 1465C440 1490 390 1495 340 1480M478 1345L535 1400" +
      "M325 1010C300 985 290 1000 260 1005C210 1000 235 950 235 920C225 880 170 880 172 840C180 810 200 830 215 840C240 820 180 790 180 760C185 720 240 720 247 770C240 850 290 850 280 890C260 950 290 940 310 940C340 950 345 980 335 1000L325 1010" +
      "M465 1285Q490 1270 515 1288M475 1268Q488 1240 498 1268Q488 1290 475 1268" + spiral(38, 1150, 50, 50) +
      oval(1011, 1174, 22, 25) + oval(953, 1137, 20, 35) + oval(968, 1236, 22, 20) + oval(1025, 1239, 25, 18) + oval(991, 1294, 20, 16) + oval(938, 1324, 17, 20) + oval(951, 1366, 18, 20) + oval(990, 1384, 20, 20) + oval(1026, 1386, 20, 20) +
      "M930 1290L838 1400L958 1568M930 1310L863 1400L950 1520L1020 1440L960 1380M1040 1430L965 1568M1045 1460L1110 1495L1060 1568M970 1310L1000 1320L1135 1480L1110 1568M1000 1325L1108 1248C1130 1290 1110 1350 1040 1355M1108 1248L1140 1290M1135 1480C1120 1500 1140 1520 1160 1510M1115 1550C1120 1530 1180 1530 1185 1555M1500 1380L1525 1392L1568 1350M1475 1530C1490 1490 1530 1480 1568 1440M605 1560C640 1520 690 1520 720 1568M710 1530L695 1560" +
      dots(10, 12, [87, 421], [478, 538], [1505, 550], [1228, 1108], [632, 1415]) + dots(14, 17, [825, 416], [377, 940], [191, 1017], [1090, 10]),
  },
  {
    x: 0, y: 2200, sx: 0.4005, sy: 0.3333, stroke: "#1f2e3a",
    d:
      "M495 180C475 130 530 60 580 62C630 70 630 140 605 180M585 62C580 30 600 40 605 60C620 40 645 60 635 75C650 90 640 120 620 100M608 48C620 65 600 80 612 95M548 85v10M585 80v10M520 120v8M550 115v10M585 118v10M505 155h8M545 155v8M582 150v8M140 230C130 190 170 185 195 195M305 180C305 168 325 168 328 180" +
      "M880 48C860 80 860 120 890 105L948 48M1168 55C1150 90 1130 140 1155 142C1190 125 1210 135 1235 120C1250 90 1230 60 1210 50M1165 50C1250 90 1340 90 1400 50M1215 50L1250 75M1410 50C1420 65 1440 60 1460 50M78 503C20 540 30 640 95 642C130 630 135 600 130 590M85 540C75 560 85 568 90 570M380 650C420 665 450 655 455 645" +
      oval(709, 144, 12, 15),
  },
  {
    x: 628, y: 2200, sx: 0.4005, sy: 0.3333, stroke: "#1a2530",
    d:
      "M210 135C260 80 370 80 430 180M625 180C590 110 600 30 650 20C720 10 750 90 778 180M658 66h18M690 103L707 108M655 98L648 118M703 148L720 155M710 25L700 50M595 117h15M745 120h20M765 170L785 158M947 180C970 140 1010 140 1035 180M1210 180C1230 140 1280 110 1310 75M1568 50C1540 90 1510 120 1495 135C1510 190 1490 250 1460 245M1345 105C1360 70 1400 70 1405 90M1375 90V118M1435 65C1455 90 1460 110 1450 118L1468 95M1395 205C1420 190 1440 170 1450 150M1425 160C1430 190 1430 200 1425 215M1540 155L1560 190M1435 230L1445 235M1470 220V240M910 0L958 48L1058 85L1120 0M980 38L1055 62L1095 0M980 38L1000 0M1115 50C1120 30 1180 30 1185 55C1185 100 1120 95 1115 50M1115 60C1140 80 1170 80 1185 60M1125 0L1145 5M1475 20L1485 0M1505 390C1520 400 1530 395 1535 390M1568 340L1560 372M1568 520C1545 560 1545 610 1568 650" +
      oval(1513, 292, 19, 22),
  },
];

function Wallpaper() {
  return (
    <div className="absolute inset-0 bg-[radial-gradient(ellipse_at_0%_70%,#15232f_0%,#15232f00_45%),radial-gradient(ellipse_at_0%_35%,#15222d_0%,#15222d00_40%),radial-gradient(ellipse_at_100%_15%,#121828_0%,#12182800_50%),linear-gradient(180deg,#101921_0%,#111a24_50%,#0d141b_100%)]">
      <svg aria-hidden="true" className="size-full" viewBox="0 0 1256 2446" preserveAspectRatio="xMidYMid slice" fill="none">
        {patches.map((p, i) => (
          <path
            key={i}
            d={p.d}
            stroke={p.stroke}
            strokeWidth="2.6"
            strokeLinecap="round"
            strokeLinejoin="round"
            vectorEffect="non-scaling-stroke"
            transform={`translate(${p.x} ${p.y}) scale(${p.sx} ${p.sy})`}
          />
        ))}
      </svg>
    </div>
  );
}

/* ---------- emoji ---------- */

function EmojiDefs() {
  return (
    <svg aria-hidden="true" className="absolute size-0">
      <defs>
        <linearGradient id="rim" x1="0" y1="0" x2="0" y2="1">
          <stop offset="0" stopColor="#fcb912" />
          <stop offset="0.6" stopColor="#f09c0e" />
          <stop offset="1" stopColor="#ea7a05" />
        </linearGradient>
        <radialGradient id="skin" cx="0.5" cy="0.05" r="0.95">
          <stop offset="0" stopColor="#fffde0" />
          <stop offset="0.22" stopColor="#fcf2a0" />
          <stop offset="0.55" stopColor="#fbdf35" />
          <stop offset="0.85" stopColor="#f8cb25" />
          <stop offset="1" stopColor="#f0a81a" />
        </radialGradient>
        <linearGradient id="tongue" x1="0" y1="0" x2="0" y2="1">
          <stop offset="0" stopColor="#e2307c" />
          <stop offset="0.3" stopColor="#fb6bad" />
          <stop offset="0.65" stopColor="#ff8bc8" />
          <stop offset="1" stopColor="#f4509a" />
        </linearGradient>
        <radialGradient id="blush">
          <stop offset="0" stopColor="#f2701d" />
          <stop offset="1" stopColor="#f2901d" stopOpacity="0" />
        </radialGradient>
      </defs>
    </svg>
  );
}

function Face() {
  return (
    <>
      <circle cx="73" cy="73" r="72" fill="url(#rim)" stroke="#dd7508" strokeWidth="2.5" />
      <ellipse cx="73" cy="72" rx="64" ry="65" fill="url(#skin)" />
    </>
  );
}

function SquintingTongue() {
  return (
    <svg role="img" aria-label="😝" viewBox="0 0 146 160" className="h-[160px] w-[146px]">
      <Face />
      <path d="M33 47C46 50 58 55 64 62C61 69 49 80 37 85C42 77 50 69 52 63C49 57 40 52 33 47Z" fill="#964800" />
      <path d="M112 47C99 50 88 55 81 62C84 69 96 80 108 85C103 77 96 69 93 63C96 57 105 52 112 47Z" fill="#964800" />
      <path d="M33 47C46 50 58 55 64 62C56 58 44 51 33 47ZM112 47C99 50 88 55 81 62C89 58 101 51 112 47Z" fill="#6d2f00" />
      <path d="M31 97C55 105 91 105 115 97C116 118 96 132 73 132C50 132 30 118 31 97Z" fill="#964800" stroke="#fdeb8d" strokeWidth="1.5" />
      <path d="M31 97C55 105 91 105 115 97L114 102C91 109 55 109 32 102Z" fill="#6a2c00" />
      <path d="M54 112C58 107 68 107 73 110C78 107 88 107 92 112V134C92 147 84 153 73 153C62 153 54 147 54 134Z" fill="url(#tongue)" stroke="#d62f62" strokeWidth="2.5" />
      <path d="M73 111V130" stroke="#cf2f78" strokeWidth="2" strokeLinecap="round" />
    </svg>
  );
}

function HandOverMouth() {
  return (
    <svg role="img" aria-label="🤭" viewBox="0 0 146 160" className="h-[160px] w-[146px]">
      <Face />
      <circle cx="27" cy="85" r="24" fill="url(#blush)" />
      <circle cx="119" cy="85" r="24" fill="url(#blush)" />
      <path d="M41 74C39 41 66 41 64 74C61 62 46 62 41 74Z" fill="#964800" />
      <path d="M82 74C80 41 107 41 105 74C102 62 87 62 82 74Z" fill="#964800" />
      <path d="M38 94C40 99 50 107 66 108" stroke="#7a3a00" strokeWidth="4" fill="none" />
      <path
        d="M63 109C73 102 82 88 90 80C97 75 101 81 97 86C102 84 113 84 111 93C118 98 119 104 113 109C106 114 98 119 92 124C100 122 109 119 112 124C113 130 108 133 100 137C92 140 88 144 84 147C76 153 70 157 61 157C52 157 41 150 39 140C34 125 42 117 46 108C47 100 44 92 45 86C47 80 56 79 58 88C60 96 58 103 60 108C61 110 62 110 63 109Z"
        fill="#fac428"
        stroke="#e27a06"
        strokeWidth="3"
        strokeLinejoin="round"
      />
      <path d="M97 86C91 93 85 100 81 109L106 87M111 94C101 102 93 109 85 119L113 108M92 124L86 132L109 129" fill="none" stroke="#e27a06" strokeWidth="3" strokeLinecap="round" strokeLinejoin="round" />
    </svg>
  );
}

function PeekingEye() {
  return (
    <svg role="img" aria-label="🫣" viewBox="0 0 66 67" className="inline-block h-[67px] w-[66px] align-[-15px]">
      <circle cx="33" cy="33" r="32.5" fill="url(#skin)" stroke="#efa21c" strokeWidth="1" />
      <path d="M12 15Q18 9 25 14M41 14Q48 9 54 15" fill="none" stroke="#7a3f08" strokeWidth="2.5" strokeLinecap="round" />
      <ellipse cx="17" cy="30" rx="10" ry="10" fill="#f3f1ea" stroke="#8a6a3a" strokeWidth="0.8" />
      <ellipse cx="49" cy="30" rx="10" ry="11" fill="#fff" stroke="#8a6a3a" strokeWidth="0.8" />
      <circle cx="49" cy="31" r="4.5" fill="#2a1505" />
      <path d="M27 54Q33 50 39 54" stroke="#7a3f08" strokeWidth="2.5" fill="none" />
      <path d="M3 42C5 36 9 41 10 43L12 26Q15 22 17 27L20 23Q23 21 23 26V24Q27 22 26 29L25 38L29 33Q33 34 30 41L27 58Q23 67 13 65Q5 62 3 42Z" fill="#ffca28" stroke="#df8c10" strokeWidth="1.4" strokeLinejoin="round" />
      <path d="M63 42C61 36 57 41 56 43L51 38L46 28Q42 24 42 30L39 24Q35 22 36 29L36 32Q32 30 34 38L38 58Q43 67 53 65Q61 62 63 42Z" fill="#ffca28" stroke="#df8c10" strokeWidth="1.4" strokeLinejoin="round" />
      <path d="M16 28L14 40M22 28L20 40M42 31L47 42M37 33L42 43" stroke="#df8c10" strokeWidth="1.4" strokeLinecap="round" />
    </svg>
  );
}

/* ---------- messages ---------- */

function Checks() {
  return (
    <svg aria-label="Đã xem" role="img" viewBox="0 0 58 34" className="mb-2 ml-4 h-[34px] w-[58px]" fill="none" stroke="currentColor" strokeWidth="5" strokeLinecap="round" strokeLinejoin="round">
      <path d="M3 20L13 31L38 5M26 29L29 31L55 3" />
    </svg>
  );
}

function SingleCheck() {
  return (
    <svg aria-label="Đã gửi" role="img" viewBox="0 0 58 34" className="mb-2 ml-4 h-[34px] w-[58px]" fill="none" stroke="currentColor" strokeWidth="5" strokeLinecap="round" strokeLinejoin="round">
      <path d="M12 20L24 31L51 3" />
    </svg>
  );
}

function Tail({ side, className }: { side: "left" | "right"; className: string }) {
  return (
    <svg
      aria-hidden="true"
      viewBox="0 0 20 40"
      className={`absolute bottom-0 h-10 w-5 ${side === "left" ? "-left-[19px]" : "-right-[19px] -scale-x-100"} ${className}`}
    >
      <path d="M20 0C20 18 12 31 1 36Q-1 38 1 40H20Z" fill="currentColor" />
    </svg>
  );
}

type BubbleProps = {
  time: string;
  out?: boolean;
  first?: boolean;
  last?: boolean;
  layout?: "inline" | "stack" | "overlap";
  tone?: string;
  tailTone?: string;
  status?: React.ReactNode;
  children: React.ReactNode;
};

function Bubble({ time, out = false, first = false, last = false, layout = "inline", tone = "", tailTone = "text-[#222d39]", status, children }: BubbleProps) {
  const corners = out
    ? `rounded-l-[60px] ${first ? "rounded-tr-[60px]" : "rounded-tr-[22px]"} ${last ? "" : "rounded-br-[22px]"}`
    : `rounded-r-[60px] ${first ? "rounded-tl-[60px]" : "rounded-tl-[22px]"} ${last ? "" : "rounded-bl-[22px]"}`;
  const side = out ? `self-end pr-6 text-white ${tone}` : "self-start bg-[#222d39] pr-10 text-[#fafbfc]";
  const flow = layout === "inline" ? "flex items-end gap-[29px]" : layout === "stack" ? "flex flex-col gap-[9px]" : "grid";
  const inlinePad = first ? (last ? "pb-[27px]" : "pb-[26px]") : last ? "pb-[23px]" : "pb-[22px]";
  const textPad = layout === "stack" ? "" : inlinePad;
  const textCell = layout === "overlap" ? "col-start-1 row-start-1 w-[884px]" : "";
  const timeCell = layout === "overlap" ? "col-start-1 row-start-1 justify-self-end" : "";
  return (
    <div className={`relative w-fit max-w-full pl-[39px] ${first ? "pt-[26px]" : "pt-[30px]"} ${corners} ${side} ${flow}`}>
      <p className={`text-[63px] leading-[73px] ${textPad} ${textCell}`}>{children}</p>
      <div className={`flex items-end self-end text-[42px] leading-[50px] ${last ? "pb-3" : "pb-4"} ${timeCell} ${out ? "" : "text-[#71808d]"}`}>
        <time>{time}</time>
        {out && (status ?? <Checks />)}
      </div>
      {last && <Tail side={out ? "right" : "left"} className={tailTone} />}
    </div>
  );
}

function BigEmoji({ time, children }: { time: string; children: React.ReactNode }) {
  return (
    <div className="mt-[29px] ml-[14px] flex w-fit flex-col items-end gap-[18px]">
      <div className="flex gap-[41px]">{children}</div>
      <time className="-mr-4 flex h-[60px] w-[148px] items-center justify-center rounded-full bg-[#222d39]/90 text-[42px] leading-[50px] text-white">{time}</time>
    </div>
  );
}

function Group({ children, className = "" }: { children: React.ReactNode; className?: string }) {
  return <div className={`flex flex-col gap-[6px] ${className}`}>{children}</div>;
}

export default function App() {
  return (
    <div className="relative h-screen overflow-hidden bg-[#0f1820] font-['Roboto',sans-serif]">
      <Wallpaper />
      <EmojiDefs />

      <main className="relative -mt-[72px] flex flex-col px-[39px]">
        <Group>
          <Bubble out first last time="23:55" tone="bg-[#9340bd]" tailTone="text-[#9340bd]">Xem mặt e đc ko</Bubble>
        </Group>

        <div className="mt-[22px]">
          <Bubble first layout="stack" time="23:55">hay mình gọi ngắm cơ thể nhau đi</Bubble>
          <BigEmoji time="23:55">
            <SquintingTongue />
            <SquintingTongue />
          </BigEmoji>
        </div>
        <Group className="mt-[33px]">
          <Bubble last layout="overlap" time="23:55">Em muốn ngắm cơ thể của anh nữa</Bubble>
        </Group>

        <Group className="mt-[25px]">
          <Bubble out first last time="23:56" tone="bg-linear-to-b from-[#7151d6] to-[#6958db]" tailTone="text-[#6958db]">Trễ r a ko tiện</Bubble>
        </Group>

        <Group className="mt-[22px]">
          <Bubble first time="23:57">Cho em ngắm đi</Bubble>
          <Bubble time="23:57">Em cho anh thấy mặt mà</Bubble>
          <Bubble last layout="stack" time="23:57">Em con gái không tiện thì có á</Bubble>
        </Group>

        <Group className="mt-[25px]">
          <Bubble out first time="23:58" tone="bg-linear-to-b from-[#4670df] to-[#3f76e0]">Trước sau cũng thấy mà</Bubble>
          <Bubble out last time="23:58" tone="bg-linear-to-b from-[#3f76e0] to-[#3b7ae0]" tailTone="text-[#3b7ae0]">
            Cứ bình tĩnh <PeekingEye />
          </Bubble>
        </Group>

        <div className="mt-[25px]">
          <Bubble first time="23:59">Em cũng đang hứng quá á</Bubble>
          <BigEmoji time="23:59">
            <HandOverMouth />
            <HandOverMouth />
          </BigEmoji>
        </div>
        <Group className="mt-[33px]">
          <Bubble last time="23:59">Cho em nhìn đi mà</Bubble>
        </Group>

        <div className="mt-7 h-[84px] w-[296px] self-center rounded-full bg-[#2d333f]" />

        <Group className="mt-7">
          <Bubble out first time="00:14" tone="bg-[#2b6fb5]" status={<SingleCheck />}>
            <span className="text-[#c4c4c4]">Hứng quá mai gặp nhau nè</span>
          </Bubble>
        </Group>
      </main>

      <div aria-hidden="true" className="absolute inset-x-0 bottom-0 h-[186px] bg-linear-to-b from-[#0d141b]/0 via-[#0d141b]/60 via-60% to-[#0d141b]/75" />
      <div aria-hidden="true" className="absolute inset-x-0 top-0 h-8 bg-linear-to-b from-[#101820]/30 to-[#101820]/0" />

      <header className="absolute inset-x-0 -top-[148px] flex h-[154px] px-[25px]">
        <span className="w-[154px] rounded-full border-b-2 border-[#34404c] bg-[#222d38]" />
        <span className="ml-6 w-[718px] rounded-full border-b-2 border-[#4a4d5c] bg-[#2d3440]" />
        <span className="ml-6 flex-1 rounded-full border-b-2 border-[#4a4d5c] bg-[#2d3040]" />
      </header>

      <footer className="absolute inset-x-[25px] bottom-8 flex flex-col items-end gap-[35px]">
        <button aria-label="Cuộn xuống" className="flex size-[154px] items-center justify-center rounded-full border border-t-[3px] border-[#37414c] bg-[#1d2732]">
          <svg viewBox="0 0 60 34" className="h-[34px] w-[60px]" fill="none" stroke="#a9adb5" strokeWidth="6" strokeLinecap="round" strokeLinejoin="round">
            <path d="M3 4L30 30L57 4" />
          </svg>
        </button>

        <form className="flex h-[154px] w-full items-center rounded-full border-2 border-t-[3px] border-[#3c5062] bg-[radial-gradient(ellipse_at_50%_110%,#21455c_0%,#1f3c52_35%,#1f2b38_75%)] pr-2 pl-[46px]">
          <button type="button" aria-label="Biểu tượng cảm xúc">
            <svg viewBox="0 0 82 82" className="size-[82px]" fill="none" stroke="#aab0b7" strokeWidth="6">
              <circle cx="41" cy="41" r="37.5" />
              <ellipse cx="28" cy="34" rx="4.5" ry="6" fill="#aab0b7" stroke="none" />
              <ellipse cx="53" cy="34" rx="4.5" ry="6" fill="#aab0b7" stroke="none" />
              <path d="M25 51C32 62 50 62 57 51" strokeLinecap="round" />
            </svg>
          </button>
          <input
            aria-label="Tin nhắn"
            placeholder="Tin nhắn"
            className="ml-11 min-w-0 flex-1 bg-transparent text-[63px] leading-[73px] text-white outline-none placeholder:text-[#6f8899]"
          />
          <button type="button" aria-label="Đính kèm">
            <svg viewBox="0 0 70 80" className="h-[80px] w-[70px]" fill="none" stroke="#aab4bd" strokeWidth="6" strokeLinecap="round" strokeLinejoin="round">
              <path d="M4 29L24 10C36 -1 54 2 62 14C69 24 68 38 60 48L35 72C28 79 15 78 8 70C2 63 2 54 8 47L31 23C36 17 44 17 49 22C53 27 52 33 48 38L26 58" />
            </svg>
          </button>
          <button type="button" aria-label="Ghi âm" className="ml-[50px] flex size-[134px] items-center justify-center rounded-full bg-[#2399ee]">
            <svg viewBox="0 0 58 70" className="h-[70px] w-[58px]" fill="none" stroke="#fff" strokeWidth="7" strokeLinecap="round">
              <rect x="16" y="1" width="26" height="45" rx="13" fill="#fff" stroke="none" />
              <path d="M4 31C4 47 14 56 29 56C44 56 54 47 54 31M29 56V65" />
            </svg>
          </button>
        </form>
      </footer>
    </div>
  );
}
